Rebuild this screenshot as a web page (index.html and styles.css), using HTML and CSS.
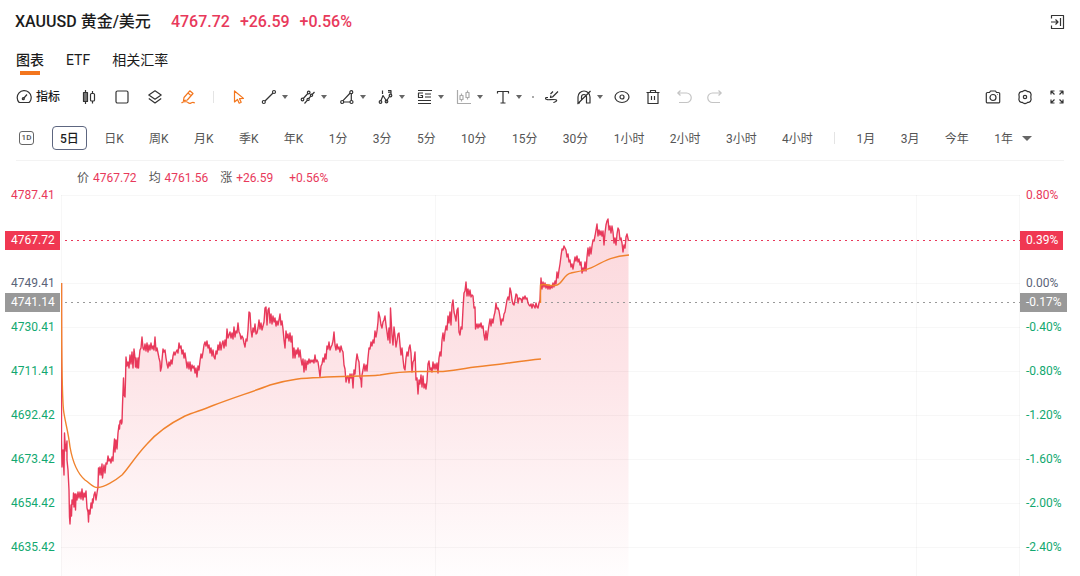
FILE: index.html
```
<!DOCTYPE html>
<html lang="zh-CN">
  <head>
    <meta charset="UTF-8" />
    <meta name="viewport" content="width=device-width, initial-scale=1.0" />
    <title>XAUUSD 黄金/美元</title>
    <link rel="stylesheet" href="styles.css">
  </head>

  <body>
    <header class="quote">
      <h1>XAUUSD 黄金/美元</h1>
      <div class="quote-price">
        <span>4767.72</span>
        <span>+26.59</span>
        <span>+0.56%</span>
      </div>
      <button class="icon-btn quote-exit" aria-label="收起">
        <svg viewBox="0 0 16 16"><path d="M2.500 4.500v-3h12v13h-12v-3M2 8h7M6.500 5.500 9 8l-2.500 2.500M11.500 4v8" /></svg>
      </button>
    </header>
    <nav class="tabs">
      <a href="#chart" class="active">图表</a>
      <a href="#etf">ETF</a>
      <a href="#rate">相关汇率</a>
    </nav>

    <!-- 工具栏 -->
    <section class="toolbar">
      <div class="tools tools-main">
        <button class="icon-btn tool-index">
          <svg viewBox="0 0 16 16"><path d="M3.200 13.500A7 7 0 1 1 13.800 12.800L13 13.500ZM7.500 9.500 11 5.500" /><circle cx="7.300" cy="9.700" r="1" /></svg>
          指标
        </button>
        <button class="icon-btn" aria-label="K线">
          <svg viewBox="0 0 16 16"><path d="M4.500 1v14M11.500 2v2.500M11.500 12v2.500" /><rect x="2.500" y="3.500" width="4" height="9" fill="#777" /><rect x="9.500" y="4.500" width="4" height="7.500" rx="1" /></svg>
        </button>
        <button class="icon-btn" aria-label="布局">
          <svg viewBox="0 0 16 16"><rect x="2" y="2" width="12" height="12" rx="1.500" /></svg>
        </button>
        <button class="icon-btn" aria-label="图层">
          <svg viewBox="0 0 16 16"><path d="M8 1.800 14.200 6 8 10.200 1.800 6ZM1.800 9.500 8 14l6.200-4.500" /></svg>
        </button>
        <button class="icon-btn orange" aria-label="画线">
          <svg viewBox="0 0 16 16"><path d="M4 8.500 9.800 1.800 13 4.500 7.300 11 3.500 11.700ZM8 4l3 2.600M1.500 14c2-2 4-1.500 5-1.200 2 .6 2 2 3.800 1.500 1.700-.5 2-2 4.500-.3" /></svg>
        </button>
        <span class="line"></span>
        <button class="icon-btn orange" aria-label="选择">
          <svg viewBox="0 0 16 16"><path d="M3.500 2v11l3-2.500 1.700 3.700 2-.9-1.700-3.600 4-.3Z" /></svg>
        </button>
      </div>
      <div class="tools tools-draw">
        <button class="icon-btn drop" aria-label="线段">
          <svg viewBox="0 0 16 16"><path d="M4 12 12 4" /><circle cx="2.800" cy="13" r="1.500" /><circle cx="13" cy="3" r="1.500" /></svg>
        </button>
        <button class="icon-btn drop" aria-label="通道">
          <svg viewBox="0 0 16 16"><path d="m3.300 9.500 4.500-5M4.500 14.500l3-3.300M8.800 9.500l2-2.300M12.200 5.500l2.300-2.500" /><circle cx="2.500" cy="10.500" r="1.300" /><circle cx="8.700" cy="3.500" r="1.300" /><circle cx="8.100" cy="10.400" r="1.100" /><circle cx="11.500" cy="6.300" r="1.100" /></svg>
        </button>
        <button class="icon-btn drop" aria-label="形状">
          <svg viewBox="0 0 16 16"><path d="M3.800 11.800 11.200 4M12.300 4.700v6.800M4.700 13H11" /><circle cx="3.200" cy="13" r="1.500" /><circle cx="12.300" cy="3.200" r="1.500" /><circle cx="12.500" cy="13" r="1.500" /></svg>
        </button>
        <button class="icon-btn drop" aria-label="波浪">
          <svg viewBox="0 0 16 16"><path d="M2.800 12 5 6.500 8.500 12 12 6.500M4.500 1.500V5M10 1.500h3V5M10 3.200h3" /><circle cx="2.500" cy="13" r="1.300" /><circle cx="8.500" cy="12.500" r="1.300" /><circle cx="12.500" cy="6.500" r="1.300" /></svg>
        </button>
        <button class="icon-btn drop" aria-label="黄金分割">
          <svg viewBox="0 0 16 16"><path d="M1 1.500h14M8 5h6M8 8h6M1 11.500h13M1 14.500h13M6 4H1.500V8.500h4V6.500H3.500" /></svg>
        </button>
        <button class="icon-btn drop muted" aria-label="区间统计">
          <svg viewBox="0 0 16 16"><path d="M1.500 1v13.500H15M5.500 4.500v8M11.500 1.500v9" /><rect x="4" y="6.500" width="3" height="4" fill="#fff" /><rect x="10" y="3.500" width="3" height="5" fill="#fff" /></svg>
        </button>
        <button class="icon-btn drop" aria-label="文字">
          <svg viewBox="0 0 16 16"><path d="M2.500 4.500v-2h11v2M8 2.500v11.500M5.500 14h5" /></svg>
        </button>
        <span class="dot"></span>
        <button class="icon-btn" aria-label="连续画线">
          <svg viewBox="0 0 16 16"><path d="M14 2.500 8.500 8l-2 .500.500-2M9 2.500 6.500 5M2 8.500c-1.500 1.500 1 2.500 4 2.200s6.500-.7 6.700.6S10 13 9.500 13.800M2 8.500h2" /></svg>
        </button>
      </div>
      <div class="tools tools-edit">
        <button class="icon-btn drop" aria-label="磁吸">
          <svg viewBox="0 0 16 16"><path d="M2 14V8a6 6 0 0 1 12 0v6h-3.500V8a2.500 2.500 0 0 0-5 0v3M2 14h2M1.500 15 14.500 2" /></svg>
        </button>
        <span class="tools tools-action">
          <button class="icon-btn" aria-label="显示">
            <svg viewBox="0 0 16 16"><ellipse cx="8" cy="8" rx="7" ry="5.500" /><circle cx="8" cy="8" r="2" /></svg>
          </button>
          <button class="icon-btn" aria-label="删除">
            <svg viewBox="0 0 16 16"><path d="M1.500 3.500h13M5.500 3V1.500h5V3M3 3.500v11h10v-11M6.500 7v4M9.500 7v4" /></svg>
          </button>
          <button class="icon-btn disabled" aria-label="撤销" disabled>
            <svg viewBox="0 0 16 16"><path d="M4.500 1.500 1.800 4l2.700 2.500M2 4h8.500a4.700 4.700 0 0 1 0 9.500H3" /></svg>
          </button>
          <button class="icon-btn disabled" aria-label="重做" disabled>
            <svg viewBox="0 0 16 16"><path d="M11.500 1.500 14.200 4l-2.700 2.500M14 4H5.500a4.700 4.700 0 0 0 0 9.500H13" /></svg>
          </button>
        </span>
      </div>
      <div class="tools tools-right">
        <button class="icon-btn" aria-label="截图">
          <svg viewBox="0 0 16 16"><path d="M2.500 3.500h2L5.500 2h5l1 1.500h2a1.200 1.200 0 0 1 1.200 1.200v8a1.200 1.200 0 0 1-1.200 1.200h-11a1.200 1.200 0 0 1-1.200-1.200v-8A1.200 1.200 0 0 1 2.500 3.500Z" /><circle cx="8" cy="8.500" r="3" /><path d="M12 5.500h.5" /></svg>
        </button>
        <button class="icon-btn" aria-label="设置">
          <svg viewBox="0 0 16 16"><path d="M6.300 2q1.700-1.200 3.400 0l.8.600 1.300.1q2 .5 2.300 2.700L13.800 8l.3 2.600q-.3 2.200-2.300 2.700l-1.300.1-.8.600q-1.700 1.200-3.400 0l-.8-.6-1.300-.1q-2-.5-2.300-2.700L2.200 8l-.3-2.600q.3-2.200 2.300-2.700l1.300-.1Z" /><circle cx="8" cy="8" r="1.700" /></svg>
        </button>
        <button class="icon-btn" aria-label="全屏">
          <svg viewBox="0 0 16 16"><path d="M2 5.500V2h3.500M2 2l3.500 3.500M10.500 2H14v3.500M14 2l-3.500 3.500M2 10.500V14h3.500M2 14l3.500-3.500M14 10.500V14h-3.500M14 14l-3.500-3.500" /></svg>
        </button>
      </div>
    </section>

    <!-- 周期 -->
    <section class="periods">
      <button class="period-day" aria-label="日">1D</button>
      <div class="period-list">
        <button class="active">5日</button>
        <button>日K</button>
        <button>周K</button>
        <button>月K</button>
        <button>季K</button>
        <button>年K</button>
        <button>1分</button>
        <button>3分</button>
        <button>5分</button>
        <button>10分</button>
        <button>15分</button>
        <button>30分</button>
        <button>1小时</button>
        <button>2小时</button>
        <button>3小时</button>
        <button>4小时</button>
        <span class="line"></span>
        <button>1月</button>
        <button>3月</button>
        <button>今年</button>
        <button class="more">1年</button>
      </div>
    </section>

    <main id="chart">
      <div class="legend">
        <span>价 <b>4767.72</b></span>
        <span>均 <b>4761.56</b></span>
        <span>涨 <b>+26.59</b></span>
        <b class="legend-rate">+0.56%</b>
      </div>
      <div class="chart">
        <ul class="axis axis-left">
          <li class="up">4787.41</li>
          <li></li>
          <li>4749.41</li>
          <li class="down">4730.41</li>
          <li class="down">4711.41</li>
          <li class="down">4692.42</li>
          <li class="down">4673.42</li>
          <li class="down">4654.42</li>
          <li class="down">4635.42</li>
        </ul>
        <svg class="plot" viewBox="61 188 959 388" preserveAspectRatio="none">
          <defs>
            <linearGradient id="fill" x1="0" y1="0" x2="0" y2="1">
              <stop offset="0" stop-color="#f0384f" stop-opacity="0.2" />
              <stop offset="0.45" stop-color="#f0384f" stop-opacity="0.13" />
              <stop offset="1" stop-color="#f0384f" stop-opacity="0.01" />
            </linearGradient>
          </defs>
          <path id="area" fill="url(#fill)" />
          <path class="grid" d="M61 195.500H1020M61 283.500H1020M61 327.500H1020M61 371.500H1020M61 415.500H1020M61 459.500H1020M61 503.500H1020M61 547.500H1020M61.500 195V576M435.500 195V576M916.500 195V576M1019.500 195V576" />
          <path class="dash dash-now" d="M65 240.500H1020" />
          <path class="dash dash-prev" d="M65 302.500H1020" />
          <path id="price" class="price" d="M61.500,283 61.500,440 62,467 63,450 64,475 64.500,433 65,442 66,451 67,441 67,460 68,470 69,490 69.500,517 70,524 71,505 71.500,516 72,500 73,504 73.500,493 74,507 75,494 75.500,510 76,494 77,500 78,492 79,498 80,492 81,499 82,489 83,500 84,493 85,497 86,491 86.500,500 87,508 88,512 88.500,522 89,510 90,514 91,503 92,508 92.500,499 93,503 94,495 95,492 96,500 97,493 98,487 98.500,468 99,475 100,467 101,475 102,464 102.500,478 104,465 105,473 106,463 107,464 108,456 109,461 110,459 111,463 112,457 113,461 113.500,450 114,445 114.500,439 115,452 116,440 117,449 118,433 119,425 119.500,429 120,421 121,420 121.500,424 122,422 122.500,405 123.500,378 124,395 125,397 125.500,380 126,357 127,366 128,362 129,368 130,355 131,364 132,352 133,368 134,349 135,358 135.500,367 136,358 137,368 138,358 138.500,368 139,360 140,350 141,348 142,337 143,348 144,350 145,344 146,351 147,343 148,352 149,345 150,350 151,343 152,349 153,346 154,350 155,337 156,351 157,348 158,353 159,358 160,362 160.500,371 161.500,367 162,360 163,349 164,352 165,350 166,358 167,364 168,368 169,362 170,366 171,360 172,364 173,356 174,352 175,355 176,352 177,350 178,353 179,343 180,348 181,346 182,354 183,350 184,358 185,353 186,360 187,368 188,362 189,369 190,362 191,371 192,365 193,368 194,366 195,373 196,368 197,377 198,366 199,370 200,361 201,354 202,358 203,352 204,345 205,342 206,346 207,341 208,348 209,345 210,353 211,348 212,356 213,350 214,357 215,359 216,351 217,354 218,345 219,350 220,342 221,350 222,344 223,341 224,348 225,340 226,346 227,329 228,338 230,332 231,338 232,333 233,339 234,327 235,337 236,331 237,333 238,323 239,332 240,334 241,339 242,336 243,338 244,343 245,347 246,339 247,341 248,330 249,312 250,313 251,330 252,337 253,328 254,332 255,324 256,334 257,333 258,328 259,320 260,329 261,323 262,330 263,326 264,322 265,308 266,307 267,325 268,310 269,308 270,323 271,314 272,324 273,316 274,322 275,318 276,326 277,321 278,325 279,320 280,314 281,325 282,321 283,329 284,340 285,348 286,331 287,338 288,334 289,341 290,333 291,342 292,336 293,358 294,348 295,358 296,350 297,354 298,348 299,357 300,350 301,359 302,365 303,359 304,372 305,360 306,370 307,361 308,364 309,359 310,363 311,360 312,362 313,360 314,363 315,355 316,362 317,360 318,362 319,369 320,377 321,366 322,364 323,358 324,362 325,354 326,359 327,346 328,349 329,342 330,350 331,347 332,345 333,341 334,332 335,345 336,350 337,344 338,349 339,347 340,352 341,346 342,350 343,352 344,365 345,369 346,382 347,377 348,376 349,383 350,374 351,378 352,374 353,388 354,370 355,374 356,362 357,354 358,359 359,362 360,377 361,380 361.500,387 362,375 363,370 364,364 365,371 366,365 367,371 368,358 369,348 370,349 371,342 372,346 373,340 374,343 375,331 376,337 377,331 378,322 378.500,312 380,318 381,325 382,328 383,322 384,320 385,316 386,325 387,332 388,340 389,328 390,343 390.500,308 392,335 393,345 394,327 395,336 396,347 397,341 398,334 399,333 400,345 401,355 402,348 403,359 404,368 405,370 406,358 407,352 408,356 409,348 410,345 411,353 412,372 413,362 414,360 415,352 416,380 417,378 418,394 419,380 420,384 421,375 422,387 423,376 424,388 425,384 426,389 427,381 428,364 429,361 430,370 431,368 432,372 433,362 434,369 435,364 436,369 437,363 438,373 439,358 440,352 441,356 442,340 443,333 444,341 445,332 446,326 447,330 448,316 449,323 450,312 451,325 452,305 453,300 454,312 455,316 456,321 457,310 458,308 459,332 460,335 461,327 462,329 463,309 464,293 465,291 466,282 467,296 468,289 469,296 470,290 471,297 472,295 473,296 474,308 475,307 475.500,329 477,324 478,328 479,324 480,327 481,323 482,328 483,326 484,335 485,340 486,331 487,340 488,332 489,325 490,319 491,326 492,319 493,323 494,316 495,312 496,303 497,309 498,308 499,311 500,317 501,325 502,319 503,321 504,314 505,312 506,306 507,300 508,297 509,300 510,288 511,292 512,300 513,304 514,305 515,300 516,294 517,295 518,303 519,298 521,299 522,302 523,297 524,299 525,296 526,299 527,298 528,303 529,305 530,306 531,304 532,308 533,304 534,306 535,308 536,303 537,307 538,308 539,303 540,300 541,278 542,289 543,282 544,287 545,283 546,288 547,285 548,289 549,285 550,289 551,286 552,288 553,283 554,287 555,281 556,284 557,272 558,278 559,270 560,264 561,256 562,249 563,250 564,246 565,248 566,250 567,257 568,254 569,262 570,260 571,267 572,264 573,269 574,263 575,257 576,261 577,256 578,262 579,259 580,265 581,262 582,273 583,268 584,271 585,262 586,271 587,257 588,248 589,256 590,247 591,254 592,246 593,240 594,241 595,236 596,230 597,224 598,236 599,230 600,235 601,231 602,236 603,231 604,245 605,233 606,225 607,221 608,219 609,230 610,226 611,233 612,226 613,232 614,243 615,238 616,245 617,234 618,228 619,230 620,240 621,238 622,243 623,252 624,245 625,248 626,237 627,234 628.500,241" />
          <path class="average" d="M61.500 283C61.500 345 61.500 390 63.500 410C65 422 68 430 70 447C73 464 78 474 85 480C91 484 93 488 98 487.500C104 487 115 481 122 475C128 469 134 458 147 444C160 429 175 421 185 416C195 412 202 410 213 405.500C235 397 252 392 270 385C290 379 303 378 320 377.500C345 376 365 376.500 380 375C396 372 405 371.500 420 371.500H443C460 370 466 368 475 367C500 365 518 361 541 359" />
          <path class="average" d="M540.500 303V285C546 283 550 287 557 285C563 283 564 274 571 273C582 271 588 270 595 266C606 260 614 256 629 255" />
        </svg>
        <ul class="axis axis-right">
          <li class="up">0.80%</li>
          <li></li>
          <li>0.00%</li>
          <li class="down">-0.40%</li>
          <li class="down">-0.80%</li>
          <li class="down">-1.20%</li>
          <li class="down">-1.60%</li>
          <li class="down">-2.00%</li>
          <li class="down">-2.40%</li>
        </ul>
        <div class="tags tags-now"><span>4767.72</span><span>0.39%</span></div>
        <div class="tags tags-prev"><span>4741.14</span><span>-0.17%</span></div>
      </div>
    </main>
    <script>
      // 价格线下方的填充区域
      const price = document.getElementById('price')
      const area = document.getElementById('area')
      area.setAttribute('d', price.getAttribute('d') + 'V576H61Z')
    </script>
  </body>
</html>
```
FILE: styles.css
```
* {
  box-sizing: border-box;
}

body {
  margin: 0;
  background: #fff;
  color: #1c1c1c;
  font-family: Roboto, "Noto Sans CJK SC", sans-serif;
  font-size: 12px;
  line-height: 20px;
}

button {
  padding: 0;
  border: 0;
  background: none;
  color: inherit;
  font: inherit;
  cursor: pointer;
}

/* 标题 */
.quote {
  display: flex;
  align-items: center;
  padding: 12px 15px 0;
  font-size: 16px;
}

h1 {
  margin: 0 20px 0 0;
  font-size: 16px;
  font-weight: 500;
}

.quote-price {
  display: flex;
  gap: 10px;
  color: #e8395b;
  font-weight: 500;
}

.quote-exit {
  margin-left: auto;
}

.tabs {
  display: flex;
  gap: 22px;
  height: 25px;
  margin: 18px 16px 0;
  font-size: 14px;
}

.tabs a {
  color: #1c1c1c;
  text-decoration: none;
}

.tabs .active {
  font-weight: 500;
}

.tabs .active::after {
  content: "";
  display: block;
  width: 20px;
  height: 4px;
  margin: 1px auto 0;
  background: #f3761d;
}

/* 工具栏 */
.toolbar {
  display: flex;
  align-items: center;
  height: 24px;
  margin: 10px 15px 0 16px;
}

.tools {
  display: flex;
  align-items: center;
}

.tools-main {
  gap: 17px;
}

.tools-draw {
  gap: 12px;
  margin-left: 14px;
}

.tools-edit {
  gap: 11px;
  margin-left: 16px;
}

.tools-action {
  gap: 15px;
}

.tools-right {
  gap: 16px;
  margin-left: auto;
}

.icon-btn {
  display: flex;
  align-items: center;
}

.icon-btn svg {
  width: 16px;
  height: 16px;
  fill: none;
  stroke: #333;
  stroke-width: 1.2;
  stroke-linejoin: round;
}

.icon-btn.orange svg {
  stroke: #f3761d;
}

.icon-btn.muted svg {
  stroke: #aaa;
}

.icon-btn.disabled svg {
  stroke: #c4c4c4;
}

.tool-index {
  gap: 4px;
  margin-right: 4px;
  font-weight: 500;
}

.drop::after,
.more::after {
  content: "";
  margin-left: 5px;
  border: 3px solid transparent;
  border-top: 4px solid #666;
  border-bottom: 0;
}

.line {
  width: 1px;
  height: 12px;
  background: #e4e4e4;
}

.dot {
  width: 2px;
  height: 2px;
  margin: 0 -2px;
  background: #aaa;
}

/* 周期 */
.periods {
  display: flex;
  align-items: center;
  margin: 17px 16px 0;
  padding: 0 24px 10px 3px;
  border-bottom: 1px solid #f3f3f3;
  color: #555;
}

.period-day {
  width: 15px;
  height: 14px;
  margin-right: 18px;
  border: 1px solid #666;
  border-radius: 3px;
  font-size: 8px;
  font-weight: 500;
  line-height: 12px;
}

.period-list {
  display: flex;
  flex: 1;
  align-items: center;
  justify-content: space-between;
}

.period-list button {
  height: 24px;
  padding: 1px 7px 0;
  border: 1px solid transparent;
  border-radius: 4px;
  line-height: 22px;
}

.period-list .active {
  border-color: #5d6680;
  color: #1c1c1c;
  font-weight: 500;
}

.period-list .line {
  margin: 0 4px;
}

.period-list .more {
  display: flex;
  align-items: center;
}

.more::after {
  margin-left: 9px;
  border-width: 5px 5px 0;
}

/* 走势图 */
.legend {
  display: flex;
  gap: 12px;
  padding: 7px 0 0 77px;
  color: #555;
}

.legend b {
  color: #e8395b;
  font-weight: 400;
}

.legend span b {
  margin-left: 1px;
}

.legend .legend-rate {
  margin-left: 4px;
}

.chart {
  position: relative;
  display: grid;
  grid-template-columns: 61px 1fr 60px;
}

.axis {
  display: flex;
  flex-direction: column;
  gap: 30px;
  margin: 0;
  padding: 0;
  color: #5a6378;
  list-style: none;
}

.axis li {
  height: 14px;
  line-height: 15px;
}

.axis-left {
  padding-left: 11px;
}

.axis-right {
  padding-left: 6px;
}

.axis .up {
  color: #e8395b;
}

.axis .down {
  color: #12a870;
}

.plot {
  display: block;
  width: 100%;
  height: 388px;
}

.plot path {
  vector-effect: non-scaling-stroke;
}

.grid {
  fill: none;
  stroke: #000;
  stroke-opacity: 0.03;
}

.dash {
  fill: none;
  stroke-dasharray: 2 4;
}

.dash-now {
  stroke: #e8395b;
}

.dash-prev {
  stroke: #999;
}

.price {
  fill: none;
  stroke: #e8395b;
  stroke-width: 1.4;
  stroke-linejoin: round;
}

.average {
  fill: none;
  stroke: #f0822d;
  stroke-width: 1.4;
}

.tags {
  position: absolute;
  right: 0;
  left: 5px;
  display: grid;
  grid-template-columns: 55px 60px;
  justify-content: space-between;
  justify-items: start;
  color: #fff;
  line-height: 19px;
}

.tags span {
  padding: 0 5px 0 6px;
}

.tags span:first-child {
  width: 100%;
}

.tags-now {
  top: 43px;
}

.tags-now span {
  background: #f03852;
}

.tags-prev {
  top: 105px;
}

.tags-prev span {
  background: #999;
}
```
